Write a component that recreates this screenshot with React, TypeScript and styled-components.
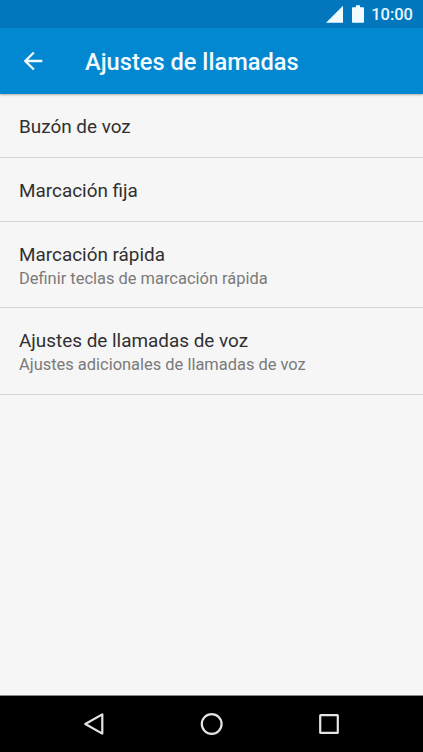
import React from "react";
import styled, { createGlobalStyle } from "styled-components";

const GlobalStyle = createGlobalStyle`
  body { margin: 0; background: #f6f6f6; }
  * { box-sizing: border-box; }
`;

const Screen = styled.div`
  display: flex;
  flex-direction: column;
  width: 423px;
  height: 752px;
  overflow: hidden;
  background: #f6f6f6;
  font-family: Roboto, sans-serif;
`;

const StatusBar = styled.div`
  display: flex;
  justify-content: flex-end;
  align-items: flex-start;
  flex: none;
  height: 28px;
  padding: 5px 10px 0 0;
  background: #0277bd;
  color: #fff;
`;

const StatusIcon = styled.svg<{ $gap: number }>`
  display: block;
  margin-right: ${(p) => p.$gap}px;
  fill: #f2fbff;
`;

const Clock = styled.span`
  font-size: 16.5px;
  line-height: 20px;
  font-weight: 500;
  color: #e6f7ff;
`;

const AppBar = styled.header`
  display: flex;
  align-items: center;
  flex: none;
  height: 66px;
  padding: 0 0 0 19px;
  background: #0288d1;
  color: #f2fbff;
  box-shadow: 0 1px 2px rgba(0, 0, 0, 0.3);
`;

const BackButton = styled.button`
  display: flex;
  width: 28px;
  height: 28px;
  padding: 0;
  margin-right: 38px;
  border: 0;
  background: none;
`;

const Title = styled.h1`
  margin: 0;
  padding-top: 2px;
  font-size: 23.65px;
  line-height: 30px;
  font-weight: 500;
`;

const List = styled.main`
  flex: 1;
`;

const Row = styled.div<{ $height: number }>`
  display: flex;
  flex-direction: column;
  justify-content: center;
  height: ${(p) => p.$height}px;
  padding: 2px 0 0 19px;
  border-bottom: 1px solid #d5d5d5;
`;

const Label = styled.div`
  font-size: 18.9px;
  line-height: 26px;
  color: #303030;
`;

const Detail = styled.div`
  font-size: 16.45px;
  line-height: 22px;
  color: #7a7a7a;
`;

const NavBar = styled.nav`
  display: grid;
  grid-template-columns: repeat(3, 117.5px);
  justify-content: center;
  align-items: center;
  justify-items: center;
  flex: none;
  height: 57px;
  border-top: 1px solid #858686;
  background: #000;
`;

const NavIcon = styled.svg`
  display: block;
  fill: none;
  stroke: #e4e4e4;
  stroke-width: 2.2;
  stroke-linejoin: round;
`;

const rows = [
  { label: "Buzón de voz", height: 64 },
  { label: "Marcación fija", height: 64 },
  { label: "Marcación rápida", detail: "Definir teclas de marcación rápida", height: 86 },
  { label: "Ajustes de llamadas de voz", detail: "Ajustes adicionales de llamadas de voz", height: 87 },
];

export default function App() {
  return (
    <Screen>
      <GlobalStyle />
      <StatusBar>
        <StatusIcon $gap={9} width="17" height="18" viewBox="0 0 17 18"><path d="M17 .8V17.8H0Z" /></StatusIcon>
        <StatusIcon $gap={7} width="12" height="18" viewBox="0 0 12 18"><path d="M4 .3h4v2h3.2q.8 0 .8.8V17q0 .8-.8.8H.8Q0 17.8 0 17V3.1q0-.8.8-.8H4Z" /></StatusIcon>
        <Clock>10:00</Clock>
      </StatusBar>
      <AppBar>
        <BackButton aria-label="Atrás">
          <svg width="28" height="28" viewBox="0 0 24 24" fill="#f2fbff"><path d="M20 11H7.83l5.59-5.59L12 4l-8 8 8 8 1.41-1.41L7.83 13H20v-2z" /></svg>
        </BackButton>
        <Title>Ajustes de llamadas</Title>
      </AppBar>
      <List>
        {rows.map((r) => (
          <Row key={r.label} $height={r.height}>
            <Label>{r.label}</Label>
            {r.detail && <Detail>{r.detail}</Detail>}
          </Row>
        ))}
      </List>
      <NavBar>
        <NavIcon width="24" height="24" viewBox="0 0 24 24"><path d="M20.3 2.4V21.6L3.3 12Z" /></NavIcon>
        <NavIcon width="24" height="24" viewBox="0 0 24 24"><circle cx="11.7" cy="12" r="9.9" /></NavIcon>
        <NavIcon width="24" height="24" viewBox="0 0 24 24"><rect x="3.2" y="3.2" width="17.6" height="17.6" rx=".4" /></NavIcon>
      </NavBar>
    </Screen>
  );
}
